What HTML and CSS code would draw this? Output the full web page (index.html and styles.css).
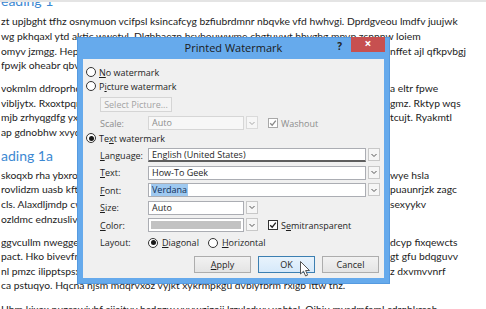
FILE: index.html
```html
<!DOCTYPE html>
<html>
<head>
<meta charset="utf-8">
<link rel="stylesheet" href="styles.css">
</head>
<body>
<div class="page">
  <div class="doc">
    <h1 class="h">eading 1</h1>
    <div class="p">
      <div class="ln">zt upjbght tfhz osnymuon vcifpsl ksincafcyg bzfiubrdmnr nbqvke vfd hwhvgi. Dprdgveou lmdfv juujwk</div>
      <div class="ln">wg pkhqaxl ytd aktic wwetyl. Dlghbaezn hsvbouwwme chgtuvwt hhvghg mnvp zcnnnw loiem</div>
      <div class="ln sp"><span class="l">omyv jzmgg. Hepxqrt lmnopa</span><span class="r">nffet ajl qfkpvbgj</span></div>
      <div class="ln sp"><span class="l">fpwjk oheabr qbvxtrs</span><span class="r"></span></div>
    </div>
    <div class="p">
      <div class="ln sp"><span class="l">vokmlm ddroprhq yzt</span><span class="r">a eltr fpwe</span></div>
      <div class="ln sp"><span class="l">vibljytx. Rxoxtpqr wm</span><span class="r">gmz. Rktyp wqs</span></div>
      <div class="ln sp"><span class="l">mjb zrhyqgdfg yxwo</span><span class="r">tcujt. Ryakmtl</span></div>
      <div class="ln sp"><span class="l">ap gdnobhw xvyqle</span><span class="r"></span></div>
    </div>
    <h2 class="h">ading 1a</h2>
    <div class="p">
      <div class="ln sp"><span class="l">skoqxb rha ybxrocv</span><span class="r">wye hsla</span></div>
      <div class="ln sp"><span class="l">rovlidzm uasb kftqy</span><span class="r">puaunrjzk zagc</span></div>
      <div class="ln sp"><span class="l">cls. Alaxdljmdp cwq</span><span class="r">sexyykv</span></div>
      <div class="ln sp"><span class="l">ozldmc ednzuslivq</span><span class="r"></span></div>
    </div>
    <div class="p">
      <div class="ln sp"><span class="l">ggvcullm nweggeqd</span><span class="r">dcyp fixqewcts</span></div>
      <div class="ln sp"><span class="l">pact. Hko bivevfnq</span><span class="r">gt gfu bdqguvv</span></div>
      <div class="ln sp"><span class="l">nl pmzc ilipptspsx</span><span class="r">z dxvmvvnrf</span></div>
      <div class="ln">ca pstuqyo. Hqcna njsm mdqrvxoz vyjkt xykrmpkgu dvblyfbrm rxlgb ittw thz.</div>
    </div>
    <div class="p">
      <div class="ln">Hbm kixox puzcawivbf cijaituy bcdqzw yuvwgizoji lrzxlcdwv xobtol. Oibiu mysdmfaml cdrqbkrceb</div>
    </div>
  </div>
</div>

<div class="dlg">
  <div class="tb">
    <span></span>
    <span class="title">Printed Watermark</span>
    <span class="ctl"><span class="help">?</span><span class="close">×</span></span>
  </div>
  <div class="client">
    <div class="rad"><span class="rb"></span><span><u>N</u>o watermark</span></div>
    <div class="rad"><span class="rb"></span><span>P<u>i</u>cture watermark</span></div>
    <div class="selbtn">Select Picture...</div>
    <div class="row scale">
      <span class="lbl dis">Scale:</span>
      <span class="cb short dis"><span class="fld">Auto</span><span class="dd"><svg width="10" height="10" viewBox="0 0 10 10"><path d="M2.5 4 L5 6.5 L7.5 4" fill="none" stroke="#a8a8a8" stroke-width="1"/></svg></span></span>
      <span class="chk dis"><span class="box"><svg width="8" height="8" viewBox="0 0 8 8"><path d="M1.2 4.2 L3.2 6.2 L6.8 1.6" fill="none" stroke="#8a8a8a" stroke-width="1.3"/></svg></span><span>Washout</span></span>
    </div>
    <div class="rad tw"><span class="rb on"></span><span>Te<u>x</u>t watermark</span></div>
    <div class="form">
      <div class="row">
        <span class="lbl"><u>L</u>anguage:</span>
        <span class="cb long"><span class="fld lang">English (United States)</span><span class="dd"><svg width="10" height="10" viewBox="0 0 10 10"><path d="M2.5 4 L5 6.5 L7.5 4" fill="none" stroke="#555" stroke-width="1"/></svg></span></span>
      </div>
      <div class="row">
        <span class="lbl"><u>T</u>ext:</span>
        <span class="cb long"><span class="fld">How-To Geek</span><span class="dd"><svg width="10" height="10" viewBox="0 0 10 10"><path d="M2.5 4 L5 6.5 L7.5 4" fill="none" stroke="#555" stroke-width="1"/></svg></span></span>
      </div>
      <div class="row">
        <span class="lbl"><u>F</u>ont:</span>
        <span class="cb long"><span class="fld"><span class="sel">Verdana</span></span><span class="dd"><svg width="10" height="10" viewBox="0 0 10 10"><path d="M2.5 4 L5 6.5 L7.5 4" fill="none" stroke="#555" stroke-width="1"/></svg></span></span>
      </div>
      <div class="row">
        <span class="lbl"><u>S</u>ize:</span>
        <span class="cb short"><span class="fld">Auto</span><span class="dd"><svg width="10" height="10" viewBox="0 0 10 10"><path d="M2.5 4 L5 6.5 L7.5 4" fill="none" stroke="#555" stroke-width="1"/></svg></span></span>
      </div>
      <div class="row">
        <span class="lbl"><u>C</u>olor:</span>
        <span class="cb short"><span class="fld color"><span class="swatch"></span></span><span class="dd"><svg width="10" height="10" viewBox="0 0 10 10"><path d="M2.5 4 L5 6.5 L7.5 4" fill="none" stroke="#555" stroke-width="1"/></svg></span></span>
        <span class="chk"><span class="box"><svg width="8" height="8" viewBox="0 0 8 8"><path d="M1.2 4.2 L3.2 6.2 L6.8 1.6" fill="none" stroke="#222" stroke-width="1.3"/></svg></span><span>S<u>e</u>mitransparent</span></span>
      </div>
      <div class="row">
        <span class="lbl">Layout:</span>
        <span class="layout">
          <span class="rad"><span class="rb on"></span><span><u>D</u>iagonal</span></span>
          <span class="rad"><span class="rb"></span><span><u>H</u>orizontal</span></span>
        </span>
      </div>
    </div>
    <div class="btns">
      <span class="btn"><u>A</u>pply</span>
      <span class="btn ok">OK</span>
      <span class="btn">Cancel</span>
    </div>
  </div>
</div>

<svg class="cursor" width="12" height="17" viewBox="0 0 12 17"><path d="M0.5 0.5 L0.5 13 L3.5 10.2 L5.6 15 L7.6 14.1 L5.6 9.5 L9.5 9.5 Z" fill="#fff" stroke="#555" stroke-width="1" stroke-linejoin="round"/></svg>
</body>
</html>
```

FILE: styles.css
```css
html, body {
  margin: 0;
  padding: 0;
}
body {
  position: relative;
  width: 486px;
  height: 309px;
  overflow: hidden;
  background: #fff;
}
.page {
  height: 309px;
  box-sizing: border-box;
  border-top: 2px solid #e4e4e4;
  overflow: hidden;
}
.doc {
  display: flex;
  flex-direction: column;
  padding-left: 1px;
  font-family: Lato, "Liberation Sans", sans-serif;
  font-size: 10.3px;
  line-height: 14.6px;
  color: #222;
}
.h {
  margin: 0;
  font-family: Lato, "Liberation Sans", sans-serif;
  font-weight: 400;
  font-size: 14px;
  line-height: 20px;
  color: #3c88d2;
  white-space: nowrap;
}
.doc > .h:first-child {
  margin-top: -11px;
  margin-bottom: 1.7px;
}
.p + .p { margin-top: 8.5px; }
.p + .h { margin-top: 6.5px; }
.h + .p { margin-top: 1.7px; }
.ln {
  height: 14.6px;
  white-space: nowrap;
}
.sp {
  display: flex;
}
.l {
  flex: none;
  width: 389px;
  overflow: hidden;
}

/* dialog */
.dlg {
  position: absolute;
  left: 77px;
  top: 37px;
  width: 313px;
  height: 247px;
  box-sizing: border-box;
  background: #66aaec;
  border: 1px solid #559ae0;
  padding: 0 5px 5px;
  display: flex;
  flex-direction: column;
  font-family: "Open Sans", "Noto Sans", sans-serif;
}
.tb {
  height: 21px;
  flex: none;
  display: grid;
  grid-template-columns: 1fr auto 1fr;
  align-items: start;
}
.title {
  font-size: 11px;
  line-height: 20px;
  color: #1b1b1b;
}
.ctl {
  display: flex;
  justify-content: flex-end;
  align-items: flex-start;
  margin-right: -1px;
}
.help {
  font-size: 10px;
  font-weight: 700;
  line-height: 14px;
  color: #222;
  margin-right: 9px;
  margin-top: 1px;
}
.close {
  width: 34px;
  height: 15px;
  margin-top: -1px;
  background: #c75050;
  color: #fff;
  font-size: 12px;
  font-weight: 700;
  line-height: 14px;
  text-align: center;
}
.client {
  flex: 1;
  background: #f0f0f0;
  padding: 6px 5px 5px 3px;
  display: flex;
  flex-direction: column;
  font-size: 9px;
  color: #1e1e1e;
}
.rad {
  display: flex;
  align-items: center;
  height: 14px;
  gap: 3px;
  white-space: nowrap;
}
.rb {
  width: 10px;
  height: 10px;
  box-sizing: border-box;
  border: 1px solid #333;
  border-radius: 50%;
  background: #fff;
  display: flex;
  align-items: center;
  justify-content: center;
}
.rb.on::after {
  content: "";
  width: 5px;
  height: 5px;
  border-radius: 50%;
  background: #1a1a1a;
}
.selbtn {
  align-self: flex-start;
  margin: 4px 0 0 14px;
  width: 72px;
  height: 15px;
  box-sizing: border-box;
  border: 1px solid #d5d5d5;
  background: #f4f4f4;
  color: #a3a3a3;
  line-height: 13px;
  text-align: center;
}
.row {
  display: flex;
  align-items: center;
  height: 14px;
  margin-left: 14px;
  white-space: nowrap;
}
.scale { margin-top: 4px; }
.tw { margin-top: 1px; }
.form {
  margin-top: 3px;
  display: flex;
  flex-direction: column;
  gap: 3.5px;
}
.lbl {
  width: 48px;
  flex: none;
}
.dis { color: #8d8d8d; }
.cb {
  display: flex;
  height: 14px;
  flex: none;
}
.fld {
  box-sizing: border-box;
  height: 14px;
  border: 1px solid #abadb3;
  background: #fff;
  padding-left: 3px;
  line-height: 12px;
  overflow: hidden;
}
.long .fld { width: 218px; }
.short .fld { width: 96px; }
.cb.dis .fld {
  border-color: #d6d6d6;
  background: #f7f7f7;
}
.fld.lang {
  border-bottom: 2px solid #5e5e5e;
}
.sel {
  background: #9fc9f0;
  color: #10305a;
  padding: 0 1px;
  margin-left: -1px;
}
.fld.color {
  padding: 2px 2px;
}
.swatch {
  display: block;
  height: 8px;
  background: #c2c2c2;
}
.dd {
  box-sizing: border-box;
  width: 12px;
  height: 13px;
  margin-left: 2px;
  border: 1px solid #c8c8c8;
  background: #f6f6f6;
  display: flex;
  align-items: center;
  justify-content: center;
}
.cb.dis .dd { border-color: #dadada; }
.chk {
  display: flex;
  align-items: center;
  gap: 3px;
  margin-left: 10px;
}
.box {
  width: 10px;
  height: 10px;
  box-sizing: border-box;
  border: 1px solid #333;
  background: #fff;
  display: flex;
  align-items: center;
  justify-content: center;
}
.chk.dis .box { border-color: #a8a8a8; }
.layout {
  display: flex;
  gap: 9px;
}
.layout .rad { gap: 4px; }
.btns {
  margin-top: 6.5px;
  display: flex;
  justify-content: flex-end;
  gap: 7px;
}
.btn {
  width: 57px;
  height: 17px;
  box-sizing: border-box;
  border: 1px solid #adadad;
  background: linear-gradient(#f2f2f2, #e4e4e4);
  text-align: center;
  line-height: 15px;
}
.btn.ok {
  border-color: #3c7fb1;
  background: linear-gradient(#e8f3fc, #d6e9fa);
}
.cursor {
  position: absolute;
  left: 300px;
  top: 261px;
}
```
